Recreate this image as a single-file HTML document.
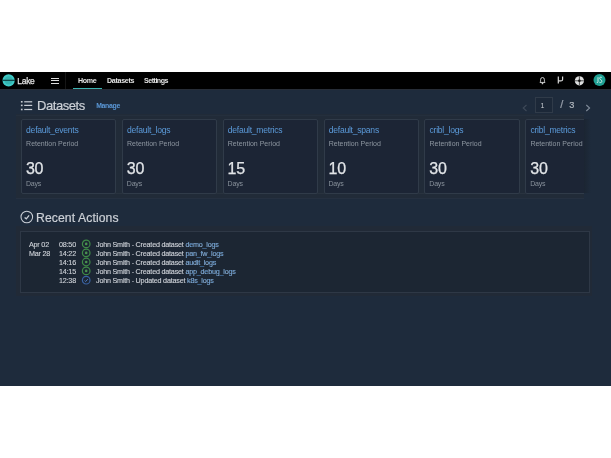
<!DOCTYPE html>
<html><head><meta charset="utf-8">
<style>
*{margin:0;padding:0;box-sizing:border-box}
html,body{width:611px;height:458px;background:#fff;overflow:hidden;font-family:"Liberation Sans",sans-serif}
#wrap{position:absolute;left:0;top:0;width:611px;height:458px;will-change:transform}
.abs{position:absolute}
#app{position:absolute;left:0;top:71.5px;width:611px;height:314.8px;background:#1e2b3c}
#nav{position:absolute;left:0;top:71.5px;width:611px;height:17px;background:#000}
.t{position:absolute;white-space:nowrap;line-height:1}
.navt{color:#e4e4e4;font-size:7.1px;font-weight:bold;letter-spacing:-0.3px}
.card{position:absolute;top:119px;width:95.3px;height:74.8px;background:#1c2535;border:1.2px solid #303b49;border-radius:2px}
.card .n{position:absolute;left:4.2px;top:6.2px;color:#5b9ad9;font-size:8.6px;letter-spacing:-0.25px;white-space:nowrap;line-height:1}
.card .r{position:absolute;left:4.2px;top:19.8px;color:#8e97a1;font-size:7px;white-space:nowrap;line-height:1}
.card .v{position:absolute;left:4px;top:41.2px;color:#e2e5e8;font-size:16px;-webkit-text-stroke:0.25px #e2e5e8;letter-spacing:-0.2px;white-space:nowrap;line-height:1}
.card .d{position:absolute;left:4px;top:59.6px;color:#88919b;font-size:7px;letter-spacing:-0.2px;white-space:nowrap;line-height:1}
.row{position:absolute;left:0;height:9px;font-size:7.2px;letter-spacing:-0.21px;line-height:9px;color:#ced2d8;white-space:nowrap;-webkit-text-stroke:0.12px #ced2d8}
.lnk{color:#5b9ad9}
</style></head><body>
<div id="wrap">
<div id="app"></div>
<div id="nav"></div>
<div class="abs" style="left:0;top:88.5px;width:611px;height:1.6px;background:#272d37"></div>
<!-- logo -->
<svg class="abs" style="left:2px;top:73.5px" width="13" height="13" viewBox="0 0 13 13">
<circle cx="6.6" cy="6.4" r="6.1" fill="#3fcac6"/>
<circle cx="6.6" cy="6.4" r="4.2" fill="#35b3b0"/>
<rect x="0" y="5.7" width="13" height="1.3" fill="#0d4a4a"/>
</svg>
<div class="t navt" style="left:17.3px;top:76.7px;font-size:8.5px;font-weight:normal;letter-spacing:-0.3px;-webkit-text-stroke:0.25px #e4e4e4">Lake</div>
<!-- hamburger -->
<div class="abs" style="left:51px;top:77.9px;width:8px;height:1px;background:#ddd"></div>
<div class="abs" style="left:51px;top:80.2px;width:8px;height:1px;background:#ddd"></div>
<div class="abs" style="left:51px;top:82.5px;width:8px;height:1px;background:#ddd"></div>
<div class="abs" style="left:64.5px;top:71.5px;width:0.8px;height:17px;background:#161616"></div>
<div class="t navt" style="left:78px;top:77.8px">Home</div>
<div class="abs" style="left:72.6px;top:88px;width:29.3px;height:1.3px;background:#3cb3b0"></div>
<div class="t navt" style="left:107px;top:77.8px">Datasets</div>
<div class="t navt" style="left:144px;top:77.8px;letter-spacing:-0.5px">Settings</div>
<!-- right icons -->
<svg class="abs" style="left:538px;top:76px" width="9" height="9" viewBox="0 0 9 9">
<path d="M2 6.4 Q2.6 5.6 2.6 4.2 V3.7 a1.9 2.2 0 0 1 3.8 0 V4.2 Q6.4 5.6 7 6.4 Z" fill="none" stroke="#cfcfcf" stroke-width="1"/>
<circle cx="4.5" cy="7.4" r="0.85" fill="#cfcfcf"/>
</svg>
<svg class="abs" style="left:556px;top:76px" width="9" height="9" viewBox="0 0 9 9">
<path d="M2.3 0.6 V7.4 M6.6 0.6 V3.4 Q6.6 4.9 4.8 4.9 H2.3" fill="none" stroke="#d8d8d8" stroke-width="1.2"/>
</svg>
<svg class="abs" style="left:574px;top:75.5px" width="11" height="10" viewBox="0 0 11 10">
<circle cx="5.4" cy="4.8" r="4.6" fill="#dedede"/>
<circle cx="5.4" cy="4.8" r="1.3" fill="#111"/>
<path d="M5.4 0.4 V9.2 M1 4.8 H9.8" stroke="#111" stroke-width="0.7"/>
</svg>
<svg class="abs" style="left:593px;top:74px" width="13" height="13" viewBox="0 0 13 13">
<circle cx="6.5" cy="6.1" r="6" fill="#20a093"/>
</svg>
<svg class="abs" style="left:595px;top:76px" width="9" height="8" viewBox="0 0 9 8"><path d="M3 1.2 V5.6 Q3 6.8 1.8 6.6" fill="none" stroke="#e0f2ef" stroke-width="0.9"/><path d="M6.9 1.6 Q6.3 1.1 5.6 1.2 Q4.6 1.3 4.7 2.3 Q4.8 3.3 5.8 3.8 Q6.9 4.3 6.8 5.4 Q6.7 6.6 5.4 6.6 Q4.7 6.6 4.3 6.1" fill="none" stroke="#e0f2ef" stroke-width="0.9"/></svg>

<!-- datasets header -->
<svg class="abs" style="left:20px;top:100px" width="13" height="11" viewBox="0 0 13 11">
<g fill="#c6cbd3"><rect x="0.9" y="1.0" width="1.7" height="1.6"/><rect x="0.9" y="4.6" width="1.7" height="1.6"/><rect x="0.9" y="8.7" width="1.7" height="1.6"/>
<rect x="4.2" y="1.2" width="8" height="1.2"/><rect x="4.2" y="4.8" width="8" height="1.2"/><rect x="4.2" y="8.9" width="8" height="1.2"/></g>
</svg>
<div class="t" style="left:37px;top:99.3px;font-size:13px;letter-spacing:-0.45px;color:#cdd1d7;-webkit-text-stroke:0.2px #cdd1d7">Datasets</div>
<div class="t" style="left:96.2px;top:103.4px;font-size:6.9px;font-weight:bold;letter-spacing:-0.32px;color:#5a97d6">Manage</div>
<!-- pagination -->
<svg class="abs" style="left:521px;top:104px" width="8" height="8" viewBox="0 0 8 8"><path d="M5.5 1 L2.2 4 L5.5 7" fill="none" stroke="#3e4958" stroke-width="1.1"/></svg>
<div class="abs" style="left:535px;top:97.3px;width:17.5px;height:15.9px;border:1px solid #303b49;background:#1c2838"></div>
<div class="t" style="left:540.6px;top:102.2px;font-size:7px;color:#c8ccd2">1</div>
<div class="t" style="left:560.2px;top:99.3px;font-size:11px;color:#9aa2ad;-webkit-text-stroke:0.2px #9aa2ad">/</div>
<div class="t" style="left:569.2px;top:101.2px;font-size:9.2px;color:#b0b6be;-webkit-text-stroke:0.2px #b0b6be">3</div>
<svg class="abs" style="left:583.5px;top:104px" width="8" height="8" viewBox="0 0 8 8"><path d="M2.3 1 L5.6 4 L2.3 7" fill="none" stroke="#7f8a99" stroke-width="1.1"/></svg>

<!-- cards -->
<div class="abs" style="left:16.3px;top:113.5px;width:567.9px;height:85px;background:#212b38"></div>
<div class="abs" style="left:16.3px;top:114.8px;width:567.9px;height:1px;background:#242f3d"></div>
<div class="abs" style="left:22px;top:192.9px;width:562px;height:1px;background:#29333f"></div>
<div class="card" style="left:20.9px"><div class="n">default_events</div><div class="r">Retention Period</div><div class="v">30</div><div class="d">Days</div></div>
<div class="card" style="left:121.8px"><div class="n">default_logs</div><div class="r">Retention Period</div><div class="v">30</div><div class="d">Days</div></div>
<div class="card" style="left:222.6px"><div class="n">default_metrics</div><div class="r">Retention Period</div><div class="v">15</div><div class="d">Days</div></div>
<div class="card" style="left:323.5px"><div class="n">default_spans</div><div class="r">Retention Period</div><div class="v">10</div><div class="d">Days</div></div>
<div class="card" style="left:424.3px"><div class="n">cribl_logs</div><div class="r">Retention Period</div><div class="v">30</div><div class="d">Days</div></div>
<div class="abs" style="left:525.2px;top:119px;width:58.6px;height:75px;overflow:hidden">
<div class="card" style="left:0;top:0"><div class="n">cribl_metrics</div><div class="r">Retention Period</div><div class="v">30</div><div class="d">Days</div></div>
</div>
<div class="abs" style="left:583.8px;top:119px;width:7px;height:74px;background:linear-gradient(90deg,#1b2532,#1e2b3c)"></div>

<div class="abs" style="left:16.3px;top:197.6px;width:567.9px;height:1px;background:#253040"></div>
<!-- recent actions -->
<svg class="abs" style="left:20px;top:210.2px" width="14" height="14" viewBox="0 0 14 14">
<circle cx="6.8" cy="7" r="5.8" fill="none" stroke="#c9ced5" stroke-width="1.05"/>
<path d="M4.6 7.4 L6.3 8.8 L9.1 5.4" fill="none" stroke="#c9ced5" stroke-width="1.3"/>
</svg>
<div class="t" style="left:36px;top:211.7px;font-size:12.2px;letter-spacing:0.1px;color:#cdd1d7;-webkit-text-stroke:0.2px #cdd1d7">Recent Actions</div>
<div class="abs" style="left:16px;top:226px;width:576px;height:69.5px;background:#212a37"></div>
<div class="abs" style="left:19.8px;top:230.8px;width:570.6px;height:62.2px;background:#1c2633;border:1.2px solid #2e3846"></div>

<div class="row" style="top:239.5px;left:29px">Apr 02</div>
<div class="row" style="top:248.5px;left:29px">Mar 28</div>
<div class="row" style="top:239.5px;left:59px">08:50</div>
<div class="row" style="top:248.5px;left:59px">14:22</div>
<div class="row" style="top:257.5px;left:59px">14:16</div>
<div class="row" style="top:266.5px;left:59px">14:15</div>
<div class="row" style="top:275.5px;left:59px">12:38</div>
<svg class="abs" style="left:81px;top:239px" width="10" height="46" viewBox="0 0 10 46">
<g fill="none" stroke="#3f8a47" stroke-width="1.2">
<circle cx="5.2" cy="4.9" r="3.8"/><circle cx="5.2" cy="13.9" r="3.8"/><circle cx="5.2" cy="23" r="3.8"/><circle cx="5.2" cy="31.9" r="3.8"/>
</g>
<g fill="#4a9250"><circle cx="5.2" cy="4.9" r="1.3"/><circle cx="5.2" cy="13.9" r="1.3"/><circle cx="5.2" cy="23" r="1.3"/><circle cx="5.2" cy="31.9" r="1.3"/></g>
<circle cx="5.2" cy="41.2" r="3.8" fill="none" stroke="#3a62a3" stroke-width="1.2"/>
<path d="M3.6 41.6 L4.7 42.5 L6.8 40.1" fill="none" stroke="#4a78c0" stroke-width="1"/>
</svg>
<div class="row" style="top:239.5px;left:96px">John Smith - Created dataset <span class="lnk">demo_logs</span></div>
<div class="row" style="top:248.5px;left:96px">John Smith - Created dataset <span class="lnk">pan_fw_logs</span></div>
<div class="row" style="top:257.5px;left:96px">John Smith - Created dataset <span class="lnk">audit_logs</span></div>
<div class="row" style="top:266.5px;left:96px">John Smith - Created dataset <span class="lnk">app_debug_logs</span></div>
<div class="row" style="top:275.5px;left:96px">John Smith - Updated dataset <span class="lnk">k8s_logs</span></div>
</div>
</body></html>
